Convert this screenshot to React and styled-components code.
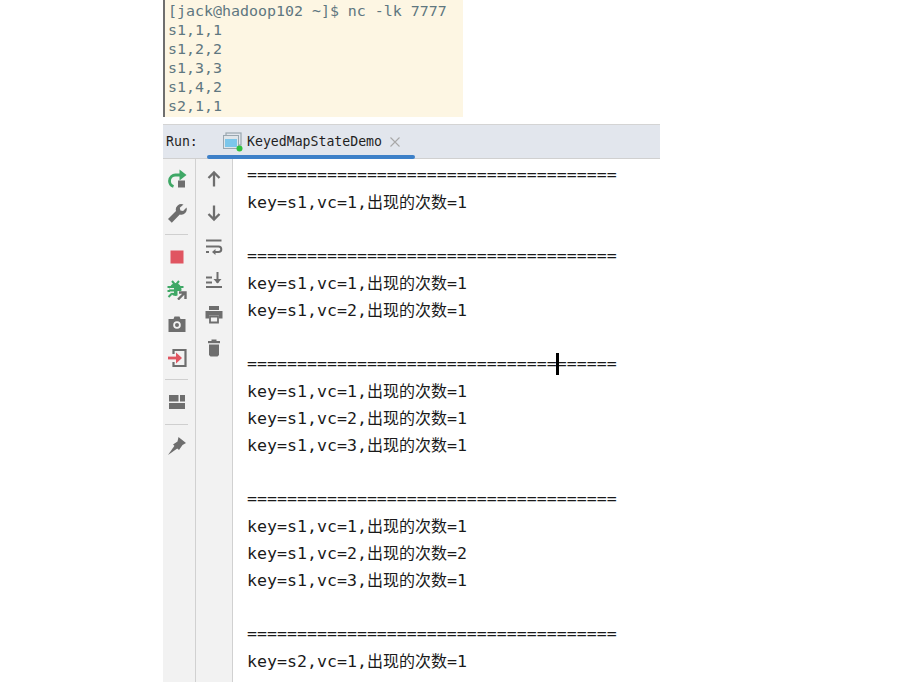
import React from "react";
import styled, { createGlobalStyle } from "styled-components";

const GlobalStyle = createGlobalStyle`
  html, body {
    margin: 0;
    padding: 0;
    height: 100%;
    background: #ffffff;
    overflow: hidden;
  }
`;

const Page = styled.div`
  width: 497px;
  height: 682px;
  margin-left: 163px;
  display: flex;
  flex-direction: column;
  overflow: hidden;
`;

const Terminal = styled.pre`
  width: 295px;
  height: 115px;
  margin: 0;
  padding: 2px 0 0 3px;
  border-left: 2px solid #6f6f6f;
  background: #fdf6e3;
  color: #5f7780;
  font-family: "DejaVu Sans Mono", monospace;
  font-size: 14.95px;
  line-height: 19px;
`;

const Panel = styled.section`
  margin-top: 7px;
  flex: 1;
  display: flex;
  flex-direction: column;
  min-height: 0;
`;

const Header = styled.header`
  height: 35px;
  flex: none;
  position: relative;
  display: flex;
  align-items: center;
  background: #e2e6ed;
  border-top: 1px solid #d4d4d4;
  border-bottom: 1px solid #d0d0d0;
  box-sizing: border-box;
  font-family: "DejaVu Sans Mono", monospace;
  font-size: 13.2px;
  color: #1f1f1f;
`;

const RunLabel = styled.span`
  margin-left: 3px;
  width: 57px;
`;

const Tab = styled.div`
  display: flex;
  align-items: center;
  gap: 4px;
`;

const CloseX = styled.svg`
  margin-left: 3px;
`;

const TabUnderline = styled.div`
  position: absolute;
  left: 44px;
  bottom: -1px;
  width: 208px;
  height: 4px;
  border-radius: 2px;
  background: #3d80c8;
`;

const Body = styled.div`
  flex: 1;
  display: flex;
  min-height: 0;
`;

const Strip = styled.div`
  width: ${props => props.width}px;
  flex: none;
  box-sizing: border-box;
  background: #f2f2f2;
  border-right: 1px solid #d1d1d1;
  display: flex;
  flex-direction: column;
  align-items: center;
  padding: 3px ${props => props.inset}px 0 0;
`;

const Tool = styled.div`
  width: 22px;
  height: 33.7px;
  flex: none;
  display: flex;
  align-items: center;
  justify-content: center;
`;

const Divider = styled.div`
  width: 23px;
  height: 1px;
  flex: none;
  background: #cfcfcf;
  margin: 4.75px 0;
`;

const Console = styled.div`
  position: relative;
  flex: 1;
  padding: 2px 0 0 14px;
  font-family: "DejaVu Sans Mono", monospace;
  font-size: 16.6px;
  color: #1a1a1a;
`;

const Line = styled.div`
  height: 27px;
  line-height: 27px;
  white-space: pre;
`;

const Cjk = styled.span`
  font-family: "Noto Sans CJK SC", sans-serif;
  font-size: 16px;
`;

const Caret = styled.div`
  position: absolute;
  left: 323px;
  top: 194px;
  width: 3px;
  height: 22px;
  background: #000000;
`;

const Icon = ({ children }) => (
  <svg width="20" height="20" viewBox="0 0 20 20" fill="none">{children}</svg>
);

const grey = "#6e6e6e";
const green = "#3fa866";
const red = "#e05561";

const RerunIcon = () => (
  <Icon>
    <path d="M13 6H9a6 6 0 0 0-6.500 6A6 6 0 0 0 6.500 17.500" stroke={green} strokeWidth="2.800" />
    <path d="M12.500 0.500l7 5.500-7 5.500z" fill={green} />
    <rect x="11" y="11.500" width="7" height="7" fill={grey} />
  </Icon>
);

const WrenchIcon = () => (
  <Icon>
    <path d="M1 16l8-8a5.500 5.500 0 0 1 7.500-6.500l-3.700 3.200.6 2.700 2.700.6 3.400-3.500a5.500 5.500 0 0 1-6.700 7l-8 8.200z" fill={grey} />
  </Icon>
);

const StopIcon = () => (
  <Icon><rect x="3.500" y="3.500" width="13" height="13" fill={red} /></Icon>
);

const BugIcon = () => (
  <Icon>
    <ellipse cx="8.500" cy="9.500" rx="6" ry="6.500" fill={green} />
    <path d="M5 1l2.500 3M12 1L9.500 4M0.500 7h4M0.500 11h4M1.500 17l3-3M12 7h4.500" stroke={green} strokeWidth="2" />
    <rect x="3" y="8" width="4" height="1.400" fill="#f2f2f2" />
    <rect x="3" y="11.500" width="4" height="1.400" fill="#f2f2f2" />
    <rect x="10.500" y="11" width="9.500" height="9" fill="#f2f2f2" />
    <path d="M11 19.500l6-6M12 12.500h6.500v6.500" stroke={grey} strokeWidth="2.400" />
  </Icon>
);

const CameraIcon = () => (
  <Icon>
    <path d="M1.500 5h5l1-2.500h5l1 2.500h5v13h-17z" fill={grey} />
    <circle cx="10" cy="11" r="3.800" fill="#f2f2f2" />
    <circle cx="10" cy="11" r="2" fill={grey} />
  </Icon>
);

const LoginIcon = () => (
  <Icon>
    <path d="M6.500 6V2h12v16h-12v-4" stroke={grey} strokeWidth="2.200" />
    <path d="M1 10h9" stroke={red} strokeWidth="2.800" />
    <path d="M9 4.500l6 5.500-6 5.500z" fill={red} />
  </Icon>
);

const LayoutIcon = () => (
  <Icon>
    <rect x="2" y="3" width="9.500" height="6.500" fill={grey} />
    <rect x="13" y="3" width="5" height="6.500" fill={grey} />
    <rect x="2" y="11" width="16" height="6" fill={grey} />
  </Icon>
);

const PinIcon = () => (
  <Icon>
    <path d="M11.500 1L19 7l-3.500 2L12 14 6 8.500l4.500-3z" fill={grey} />
    <path d="M8 9L1 19l10-7z" fill={grey} />
  </Icon>
);

const ArrowIcon = ({ up }) => (
  <Icon>
    {up
      ? <path d="M10 17.500V3.500M4.500 9L10 3.500 15.500 9" stroke={grey} strokeWidth="2.300" />
      : <path d="M10 2.500v14M4.500 11l5.500 5.500 5.500-5.500" stroke={grey} strokeWidth="2.300" />}
  </Icon>
);

const WrapIcon = () => (
  <Icon>
    <path d="M2 4.500h15.500" stroke={grey} strokeWidth="2" />
    <path d="M2 10.500h12.500a2.800 2.800 0 0 1 0 5.600H10" stroke={grey} strokeWidth="2" />
    <path d="M2 16h3" stroke={grey} strokeWidth="2" />
    <path d="M11.500 13l-3.500 3 3.500 3z" fill={grey} />
  </Icon>
);

const ScrollEndIcon = () => (
  <Icon>
    <path d="M2 17h16M2 7.500h6M2 12.500h6M13.500 2v11" stroke={grey} strokeWidth="2" />
    <path d="M9.500 9l4 4.500 4-4.500z" fill={grey} />
  </Icon>
);

const PrintIcon = () => (
  <Icon>
    <rect x="5" y="2" width="10" height="4" fill={grey} />
    <path d="M1.500 7h17v7.500H15v-3H5v3H1.500z" fill={grey} />
    <path d="M6 12.500h8v6H6z" stroke={grey} strokeWidth="1.800" />
  </Icon>
);

const TrashIcon = () => (
  <Icon>
    <rect x="4" y="4" width="12" height="2.200" fill={grey} />
    <rect x="7.500" y="2.500" width="5" height="2" fill={grey} />
    <path d="M5 7.500h10v10.500l-1.500 1.500h-7L5 18z" fill={grey} />
  </Icon>
);

const AppWindowIcon = () => (
  <svg width="20" height="20" viewBox="0 0 20 20" fill="none">
    <rect x="3" y="1" width="15" height="12" stroke="#9aa7b0" strokeWidth="1.200" />
    <rect x="0.500" y="3.500" width="15" height="13" fill="#dfe5ea" stroke="#9aa7b0" strokeWidth="1" />
    <rect x="2" y="7" width="12" height="8" fill="#7cc6ea" />
    <circle cx="16.500" cy="16.500" r="3" fill="#2fc13f" />
  </svg>
);

const rule = "=".repeat(37);

const groups = [
  [["s1", 1, 1]],
  [["s1", 1, 1], ["s1", 2, 1]],
  [["s1", 1, 1], ["s1", 2, 1], ["s1", 3, 1]],
  [["s1", 1, 1], ["s1", 2, 2], ["s1", 3, 1]],
  [["s2", 1, 1]],
];

const App = () => (
  <Page>
    <GlobalStyle />
    <Terminal>{`[jack@hadoop102 ~]$ nc -lk 7777
s1,1,1
s1,2,2
s1,3,3
s1,4,2
s2,1,1`}</Terminal>
    <Panel>
      <Header>
        <RunLabel>Run:</RunLabel>
        <Tab>
          <AppWindowIcon />
          <span>KeyedMapStateDemo</span>
          <CloseX width="12" height="12" viewBox="0 0 12 12">
            <path d="M1.500 1.500l9 9M10.500 1.500l-9 9" stroke="#a8a8a8" strokeWidth="1.100" />
          </CloseX>
        </Tab>
        <TabUnderline />
      </Header>
      <Body>
        <Strip width={33} inset={5}>
          <Tool><RerunIcon /></Tool>
          <Tool><WrenchIcon /></Tool>
          <Divider />
          <Tool><StopIcon /></Tool>
          <Tool><BugIcon /></Tool>
          <Tool><CameraIcon /></Tool>
          <Tool><LoginIcon /></Tool>
          <Divider />
          <Tool><LayoutIcon /></Tool>
          <Divider />
          <Tool><PinIcon /></Tool>
        </Strip>
        <Strip width={37} inset={1}>
          <Tool><ArrowIcon up /></Tool>
          <Tool><ArrowIcon /></Tool>
          <Tool><WrapIcon /></Tool>
          <Tool><ScrollEndIcon /></Tool>
          <Tool><PrintIcon /></Tool>
          <Tool><TrashIcon /></Tool>
        </Strip>
        <Console>
          {groups.map((lines, i) => (
            <div key={i}>
              <Line>{rule}</Line>
              {lines.map((row, j) => (
                <Line key={j}>key={row[0]},vc={row[1]},<Cjk>出现的次数</Cjk>={row[2]}</Line>
              ))}
              <Line />
            </div>
          ))}
          <Caret />
        </Console>
      </Body>
    </Panel>
  </Page>
);

export default App;
